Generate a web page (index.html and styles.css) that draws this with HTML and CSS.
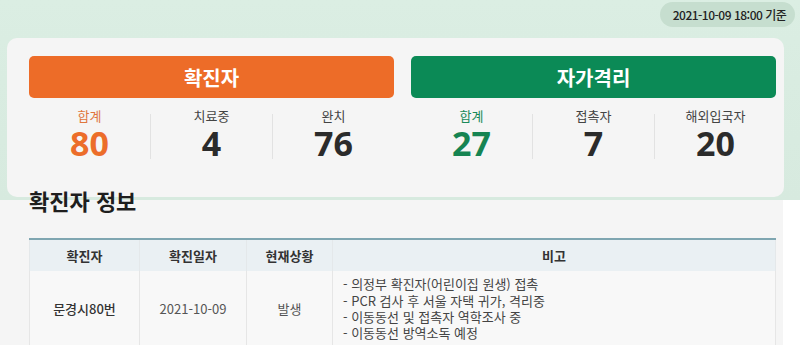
FILE: index.html
```html
<!DOCTYPE html>
<html lang="ko">
<head>
<meta charset="utf-8">
<link rel="stylesheet" href="styles.css">
</head>
<body>
<div class="page">
  <section class="top">
    <div class="stamp-row"><span class="stamp">2021-10-09 18:00 기준</span></div>
    <div class="card">
      <div class="panel">
        <div class="bar bar-orange">확진자</div>
        <div class="stats">
          <div class="stat"><div class="label label-orange">합계</div><div class="num num-orange">80</div></div>
          <div class="stat"><div class="label">치료중</div><div class="num">4</div></div>
          <div class="stat"><div class="label">완치</div><div class="num">76</div></div>
        </div>
      </div>
      <div class="panel">
        <div class="bar bar-green">자가격리</div>
        <div class="stats">
          <div class="stat"><div class="label label-green">합계</div><div class="num num-green">27</div></div>
          <div class="stat"><div class="label">접촉자</div><div class="num">7</div></div>
          <div class="stat"><div class="label">해외입국자</div><div class="num">20</div></div>
        </div>
      </div>
    </div>
  </section>
  <section class="info">
    <h2 class="title">확진자 정보</h2>
    <table class="tbl">
      <colgroup><col class="c1"><col class="c2"><col class="c3"><col class="c4"></colgroup>
      <thead>
        <tr><th>확진자</th><th>확진일자</th><th>현재상황</th><th>비고</th></tr>
      </thead>
      <tbody>
        <tr>
          <td class="name">문경시80번</td>
          <td>2021-10-09</td>
          <td>발생</td>
          <td class="note">- 의정부 확진자(어린이집 원생) 접촉<br>- PCR 검사 후 서울 자택 귀가, 격리중<br>- 이동동선 및 접촉자 역학조사 중<br>- 이동동선 방역소독 예정</td>
        </tr>
      </tbody>
    </table>
  </section>
</div>
</body>
</html>
```

FILE: styles.css
```css
* { box-sizing: border-box; }
html, body { margin: 0; padding: 0; }
body {
  width: 800px;
  height: 345px;
  overflow: hidden;
  background: #ffffff;
  font-family: "Noto Sans CJK KR", "Noto Sans", sans-serif;
  color: #333;
}
.page {
  width: 783px;
  background: #f5f5f5;
  min-height: 345px;
}
.top {
  width: 800px;
  background: linear-gradient(180deg, #dbeee3 0%, #d9ece1 40%, #d7eadf 100%);
  padding: 2px 5px 3px 7px;
}
.stamp-row {
  display: flex;
  justify-content: flex-end;
}
.stamp {
  display: inline-flex;
  align-items: center;
  height: 25px;
  width: 135px;
  justify-content: center;
  padding: 0 0 0 4px;
  border-radius: 13px;
  background: #c6decf;
  font-size: 12px;
  font-weight: 500;
  color: #222;
  letter-spacing: -0.5px;
}
.card {
  margin: 11px 11px 0 0;
  height: 159px;
  background: #f5f5f5;
  border-radius: 10px;
  padding: 18px 8px 0 22px;
  display: flex;
  gap: 17px;
}
.panel { width: 365px; }
.bar {
  height: 42px;
  border-radius: 5px;
  display: flex;
  align-items: center;
  justify-content: center;
  color: #fff;
  font-size: 20px;
  font-weight: 700;
}
.bar-orange { background: #ed6c28; }
.bar-green { background: #0b8a56; }
.stats {
  display: flex;
  margin-top: 16px;
}
.stat {
  flex: 1;
  height: 45px;
  display: flex;
  flex-direction: column;
  align-items: center;
}
.stat + .stat { border-left: 1px solid #e2e2e2; }
.label {
  margin-top: -6px;
  line-height: 16px;
  font-size: 13px;
  color: #444;
}
.label-orange { color: #e0773d; }
.label-green { color: #1a8a5a; }
.num {
  margin-top: 4px;
  line-height: 30px;
  font-size: 34px;
  font-weight: 700;
  color: #2b2b2b;
  font-family: "Noto Sans", "Noto Sans CJK KR", sans-serif;
}
.num-orange { color: #ec6d2a; }
.num-green { color: #168452; }
.info {
  padding: 0 7px 0 29px;
}
.title {
  margin: -14px 0 0 0;
  line-height: 28px;
  font-size: 22px;
  font-weight: 700;
  color: #1e1e1e;
}
.tbl {
  margin-top: 24px;
  width: 747px;
  border-collapse: collapse;
  border-top: 2px solid #7fa6b1;
  font-size: 13px;
}
.c1 { width: 110px; }
.c2 { width: 107px; }
.c3 { width: 86px; }
th {
  height: 32px;
  background: #eaf0f3;
  font-weight: 700;
  color: #333;
  border-left: 1px solid #e4e8ea;
  border-right: 1px solid #e4e8ea;
  padding: 0;
}
td {
  background: #f8f8f8;
  border: 1px solid #e6e6e6;
  border-top: 0;
  text-align: center;
  vertical-align: middle;
  color: #555;
  padding: 0;
  height: 76px;
}
td.name { color: #333; font-weight: 500; }
td.note {
  text-align: left;
  padding: 5px 10px;
  line-height: 16.2px;
  color: #444;
}
```
